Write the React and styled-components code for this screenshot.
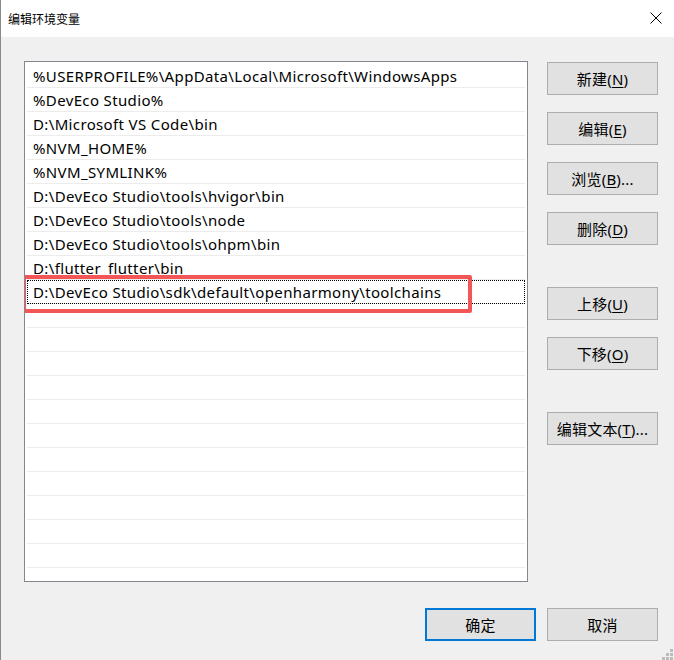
import React from 'react';
import styled, { createGlobalStyle } from 'styled-components';

const GlobalStyle = createGlobalStyle`
    html, body {
        margin: 0;
        padding: 0;
        background: #f0f0f0;
    }
    * {
        box-sizing: border-box;
    }
`;

const paths = [
    '%USERPROFILE%\\AppData\\Local\\Microsoft\\WindowsApps',
    '%DevEco Studio%',
    'D:\\Microsoft VS Code\\bin',
    '%NVM_HOME%',
    '%NVM_SYMLINK%',
    'D:\\DevEco Studio\\tools\\hvigor\\bin',
    'D:\\DevEco Studio\\tools\\node',
    'D:\\DevEco Studio\\tools\\ohpm\\bin',
    'D:\\flutter_flutter\\bin',
    'D:\\DevEco Studio\\sdk\\default\\openharmony\\toolchains',
];

const sideButtons = [
    { label: '新建', key: 'N' },
    { label: '编辑', key: 'E' },
    { label: '浏览', key: 'B', more: true },
    { label: '删除', key: 'D' },
    { label: '上移', key: 'U', group: true },
    { label: '下移', key: 'O' },
    { label: '编辑文本', key: 'T', more: true, group: true },
];

export default function App() {
    const selected = 9;
    const rows = [...paths, ...Array(13).fill('')];

    return (
        <Window>
            <GlobalStyle />
            <TitleBar>
                <Title>编辑环境变量</Title>
                <Close>
                    <svg width="12" height="12" viewBox="0 0 12 12">
                        <path d="M0.5 0.5 L11.5 11.5 M11.5 0.5 L0.5 11.5" stroke="#000" strokeWidth="1" />
                    </svg>
                </Close>
            </TitleBar>
            <Body>
                <Main>
                    <ListBox>
                        {rows.map((item, i) => (
                            <Row key={i} $focused={i === selected}>{item}</Row>
                        ))}
                        <Highlight />
                    </ListBox>
                    <SideColumn>
                        {sideButtons.map((b) => (
                            <Button key={b.key} $group={b.group}>
                                {b.label}(<u>{b.key}</u>){b.more ? '...' : ''}
                            </Button>
                        ))}
                    </SideColumn>
                </Main>
                <Footer>
                    <Button $primary>确定</Button>
                    <Button>取消</Button>
                </Footer>
            </Body>
            <Grip>
                <svg width="11" height="11" viewBox="0 0 11 11">
                    <rect x="8" y="0" width="3" height="3" fill="#bcbcbc" />
                    <rect x="4" y="4" width="3" height="3" fill="#bcbcbc" />
                    <rect x="8" y="4" width="3" height="3" fill="#bcbcbc" />
                    <rect x="0" y="8" width="3" height="3" fill="#bcbcbc" />
                    <rect x="4" y="8" width="3" height="3" fill="#bcbcbc" />
                    <rect x="8" y="8" width="3" height="3" fill="#bcbcbc" />
                </svg>
            </Grip>
        </Window>
    );
}

const Window = styled.div`
    position: relative;
    width: 674px;
    height: 660px;
    background: #f0f0f0;
    border-left: 1px solid #8a8a8a;
    font-family: "Noto Sans", "Noto Sans CJK SC", sans-serif;
    color: #000;
    overflow: hidden;
`;

const TitleBar = styled.div`
    height: 37px;
    background: #fff;
    display: flex;
    align-items: center;
    justify-content: space-between;
    padding: 0 12px 0 7px;
`;

const Title = styled.div`
    font-family: "Noto Sans CJK SC", sans-serif;
    font-size: 12px;
    line-height: 1;
    margin-top: 1px;
`;

const Close = styled.div`
    width: 12px;
    height: 12px;
    display: flex;
    margin-top: -1px;
`;

const Body = styled.div`
    padding: 24px 16px 0 23px;
    display: flex;
    flex-direction: column;
`;

const Main = styled.div`
    display: flex;
    gap: 19px;
`;

const ListBox = styled.div`
    position: relative;
    width: 504px;
    height: 521px;
    background: #fff;
    border: 1px solid #828790;
    padding: 2px 2px 0;
    overflow: hidden;
`;

const Row = styled.div`
    height: 24px;
    border-bottom: 1px solid #ececec;
    padding-left: 6px;
    font-size: 15px;
    letter-spacing: 0.36px;
    line-height: 24px;
    white-space: nowrap;
    outline: ${p => (p.$focused ? '1px dotted #000' : 'none')};
    outline-offset: -1px;
`;

const Highlight = styled.div`
    position: absolute;
    left: -3px;
    top: 213px;
    width: 450px;
    height: 38px;
    border: 4px solid #f35656;
    border-radius: 2px;
`;

const SideColumn = styled.div`
    display: flex;
    flex-direction: column;
    gap: 17px;
    padding-top: 1px;
`;

const Button = styled.div`
    width: 111px;
    height: 33px;
    margin-top: ${p => (p.$group ? '25px' : '0')};
    background: #e1e1e1;
    border: ${p => (p.$primary ? '2px solid #0078d7' : '1px solid #adadad')};
    display: flex;
    align-items: center;
    justify-content: center;
    font-size: 15px;
    letter-spacing: 0.2px;
    white-space: nowrap;

    u {
        text-decoration-thickness: 1px;
        text-underline-offset: 2px;
    }
`;

const Footer = styled.div`
    display: flex;
    justify-content: flex-end;
    gap: 11px;
    margin-top: 26px;
`;

const Grip = styled.div`
    position: absolute;
    right: 1px;
    bottom: 0;
    width: 11px;
    height: 11px;
    display: flex;
`;
